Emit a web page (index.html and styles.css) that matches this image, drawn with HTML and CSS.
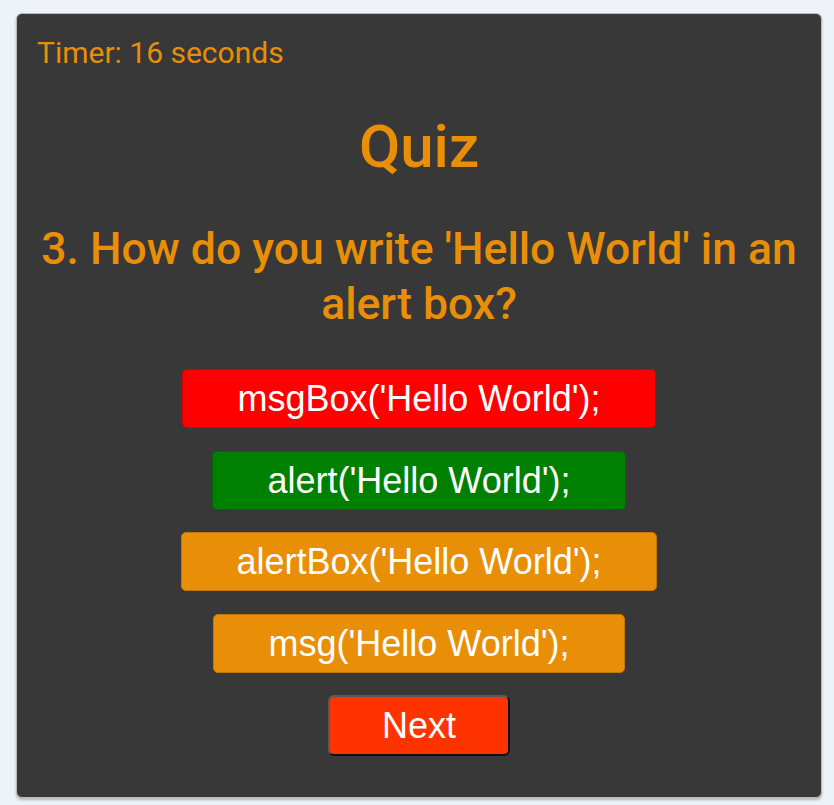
FILE: index.html
```html
<!DOCTYPE html>
<html>
<head>
<meta charset="utf-8">
<title>Quiz</title>
<link rel="stylesheet" href="styles.css">
</head>
<body>
<div class="card">
  <div class="timer">Timer: 16 seconds</div>
  <h1 class="title">Quiz</h1>
  <h2 class="question">3. How do you write 'Hello World' in an alert box?</h2>
  <div class="options">
    <button class="opt wrong">msgBox('Hello World');</button>
    <button class="opt right">alert('Hello World');</button>
    <button class="opt">alertBox('Hello World');</button>
    <button class="opt">msg('Hello World');</button>
    <button class="next">Next</button>
  </div>
</div>
</body>
</html>
```

FILE: styles.css
```css
html, body {
  margin: 0;
  padding: 0;
}
body {
  background: #eef3f8;
  padding: 13px 12px 7px 16px;
  height: 805px;
  box-sizing: border-box;
}
.card {
  background: #383838;
  border: 1px solid #b8bcc0;
  border-radius: 6px;
  box-shadow: 0 2px 3px rgba(0, 0, 0, 0.25);
  height: 785px;
  box-sizing: border-box;
  padding: 21px 20px;
  font-family: Roboto, "Liberation Sans", sans-serif;
  color: #e98e07;
}
.timer {
  font-size: 30px;
  line-height: 36px;
}
.title {
  font-size: 60px;
  font-weight: 500;
  text-align: center;
  margin: 41px 0 0;
  line-height: 70px;
}
.question {
  font-size: 44.5px;
  font-weight: 500;
  text-align: center;
  margin: 40px -6px 0;
  line-height: 55px;
}
.options {
  display: flex;
  flex-direction: column;
  align-items: center;
  gap: 22.5px;
  margin-top: 37px;
}
.opt, .next {
  font-family: "Liberation Sans", Arial, sans-serif;
  font-size: 36px;
  color: #fff;
  border-radius: 5px;
  padding: 8px 54px;
  line-height: 41px;
  cursor: pointer;
}
.opt {
  background: #e98e07;
  border: 1px solid #c27609;
}
.opt.wrong {
  background: #ff0000;
  border-color: #d40000;
}
.opt.right {
  background: #008000;
  border-color: #006c00;
}
.next {
  background: #ff3300;
  border: 2px solid;
  border-color: #5a5a5a #111 #111 #5a5a5a;
  border-radius: 6px;
  padding: 8px 52px;
}
```
